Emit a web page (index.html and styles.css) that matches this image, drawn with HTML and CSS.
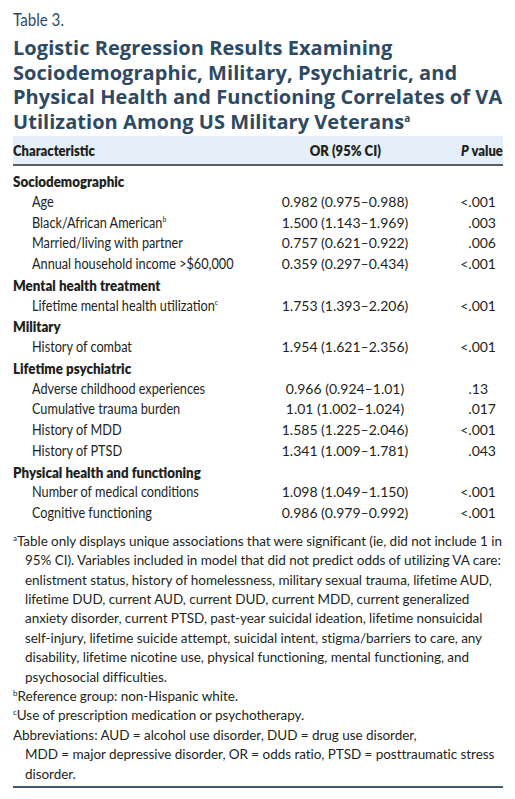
FILE: index.html
```html
<!DOCTYPE html>
<html>
<head>
<meta charset="utf-8">
<link rel="stylesheet" href="styles.css">
</head>
<body>
<div class="page">
  <div class="label"><span class="cn">Table 3.</span></div>
  <h1 class="title">Logistic Regression Results Examining<br>Sociodemographic, Military, Psychiatric, and<br>Physical Health and Functioning Correlates of VA<br>Utilization Among US Military Veterans<sup class="tsup">a</sup></h1>
  <div class="thead">
    <div class="c1"><span class="cn">Characteristic</span></div>
    <div class="c2"><span class="cn mid">OR (95% CI)</span></div>
    <div class="c3"><span class="cn end"><i>P</i> value</span></div>
  </div>
  <div class="tbody">
    <div class="sec"><span class="cn">Sociodemographic</span></div>
    <div class="row"><div class="c1"><span class="cn">Age</span></div><div class="c2">0.982 (0.975–0.988)</div><div class="c3">&lt;.001</div></div>
    <div class="row"><div class="c1"><span class="cn">Black/African American<sup>b</sup></span></div><div class="c2">1.500 (1.143–1.969)</div><div class="c3">.003</div></div>
    <div class="row"><div class="c1"><span class="cn">Married/living with partner</span></div><div class="c2">0.757 (0.621–0.922)</div><div class="c3">.006</div></div>
    <div class="row"><div class="c1"><span class="cn">Annual household income &gt;$60,000</span></div><div class="c2">0.359 (0.297–0.434)</div><div class="c3">&lt;.001</div></div>
    <div class="sec"><span class="cn">Mental health treatment</span></div>
    <div class="row"><div class="c1"><span class="cn">Lifetime mental health utilization<sup>c</sup></span></div><div class="c2">1.753 (1.393–2.206)</div><div class="c3">&lt;.001</div></div>
    <div class="sec"><span class="cn">Military</span></div>
    <div class="row"><div class="c1"><span class="cn">History of combat</span></div><div class="c2">1.954 (1.621–2.356)</div><div class="c3">&lt;.001</div></div>
    <div class="sec"><span class="cn">Lifetime psychiatric</span></div>
    <div class="row"><div class="c1"><span class="cn">Adverse childhood experiences</span></div><div class="c2">0.966 (0.924–1.01)</div><div class="c3 short">.13</div></div>
    <div class="row"><div class="c1"><span class="cn">Cumulative trauma burden</span></div><div class="c2">1.01 (1.002–1.024)</div><div class="c3">.017</div></div>
    <div class="row"><div class="c1"><span class="cn">History of MDD</span></div><div class="c2">1.585 (1.225–2.046)</div><div class="c3">&lt;.001</div></div>
    <div class="row"><div class="c1"><span class="cn">History of PTSD</span></div><div class="c2">1.341 (1.009–1.781)</div><div class="c3">.043</div></div>
    <div class="sec"><span class="cn">Physical health and functioning</span></div>
    <div class="row"><div class="c1"><span class="cn">Number of medical conditions</span></div><div class="c2">1.098 (1.049–1.150)</div><div class="c3">&lt;.001</div></div>
    <div class="row"><div class="c1"><span class="cn">Cognitive functioning</span></div><div class="c2">0.986 (0.979–0.992)</div><div class="c3">&lt;.001</div></div>
  </div>
  <div class="notes">
    <p class="note hang"><sup>a</sup>Table only displays unique associations that were significant (ie, did not include 1 in<br>95% CI). Variables included in model that did not predict odds of utilizing VA care:<br>enlistment status, history of homelessness, military sexual trauma, lifetime AUD,<br>lifetime DUD, current AUD, current DUD, current MDD, current generalized<br>anxiety disorder, current PTSD, past-year suicidal ideation, lifetime nonsuicidal<br>self-injury, lifetime suicide attempt, suicidal intent, stigma/barriers to care, any<br>disability, lifetime nicotine use, physical functioning, mental functioning, and<br>psychosocial difficulties.</p>
    <p class="note"><sup>b</sup>Reference group: non-Hispanic white.</p>
    <p class="note"><sup>c</sup>Use of prescription medication or psychotherapy.</p>
    <p class="note hang">Abbreviations: AUD = alcohol use disorder, DUD = drug use disorder,<br>MDD = major depressive disorder, OR = odds ratio, PTSD = posttraumatic stress<br>disorder.</p>
  </div>
  <div class="endrule"></div>
</div>
</body>
</html>
```
FILE: styles.css
```css
html, body {
  margin: 0;
  padding: 0;
  background: #ffffff;
}
.page {
  width: 490px;
  padding: 8px 0 0 13px;
  color: #231f20;
}
.label {
  font-family: Lato, sans-serif;
  font-size: 18px;
  line-height: 22px;
  color: #2e4a63;
}
.label .cn { transform: scaleX(0.84); }
.title {
  margin: 6px 0 0 0;
  font-family: "Open Sans", sans-serif;
  font-weight: 700;
  font-size: 20px;
  line-height: 24.5px;
  color: #2e4a63;
  white-space: nowrap;
  letter-spacing: 0.05px;
}
.tsup {
  font-size: 10px;
  vertical-align: 7px;
  line-height: 0;
}
.cn {
  display: inline-block;
  white-space: nowrap;
  transform-origin: left center;
  transform: scaleX(0.875);
}
.cn.mid { transform-origin: center center; }
.cn.end { transform-origin: right center; }
.thead {
  display: grid;
  grid-template-columns: 267px 130px 93px;
  height: 28px;
  align-items: center;
  margin-top: 2px;
  background: #e5eff9;
  border-bottom: 2px solid #5b5d60;
  font-family: Lato, sans-serif;
  font-weight: 800;
  font-size: 15.5px;
}
.thead .cn { transform: scaleX(0.84); }
.thead .c2 { text-align: center; }
.thead .c3 { text-align: right; }
.tbody {
  padding-top: 5px;
}
.sec {
  font-family: Lato, sans-serif;
  font-weight: 800;
  font-size: 15px;
  line-height: 20.75px;
}
.sec .cn { transform: scaleX(0.89); }
.row {
  display: grid;
  grid-template-columns: 267px 130px 93px;
  line-height: 20.75px;
  font-size: 14px;
}
.row .c1 {
  padding-left: 19px;
  font-family: Lato, sans-serif;
  font-size: 14.5px;
}
.row .c1 sup {
  font-size: 8px;
  line-height: 0;
  vertical-align: 6px;
}
.row .c2 {
  text-align: center;
  font-family: Lato, sans-serif;
  font-size: 14px;
}
.row .c3 {
  text-align: right;
  padding-right: 7px;
  font-family: Lato, sans-serif;
  font-size: 14px;
}
.row .c3.short {
  padding-right: 15px;
}
.notes {
  margin-top: 8px;
  font-family: Lato, sans-serif;
  font-size: 13.5px;
  line-height: 19.4px;
  white-space: nowrap;
  letter-spacing: -0.05px;
}
.note {
  margin: 0;
}
.note sup {
  font-size: 8px;
  line-height: 0;
  vertical-align: baseline;
  position: relative;
  top: -5px;
}
.hang {
  padding-left: 12px;
  text-indent: -12px;
}
.endrule {
  margin-top: 2px;
  height: 2px;
  background: #3e5a72;
}
```
